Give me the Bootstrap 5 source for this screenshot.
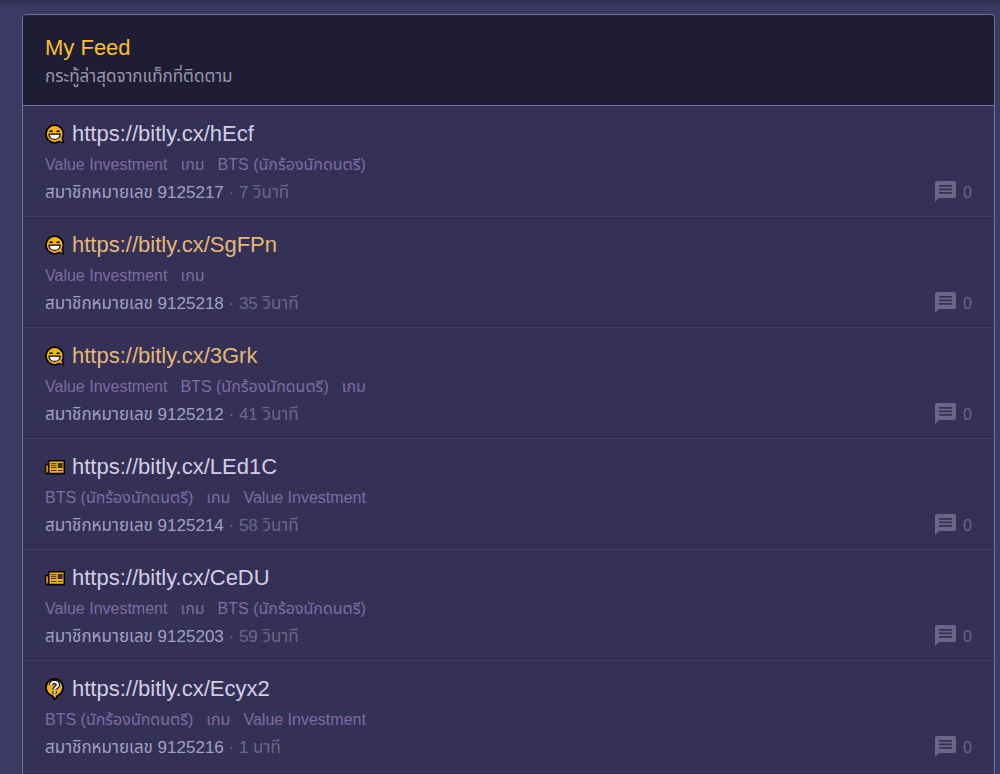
<!DOCTYPE html>
<html lang="th">
<head>
<meta charset="utf-8">
<meta name="viewport" content="width=device-width, initial-scale=1">
<title>My Feed</title>
<link href="https://cdn.jsdelivr.net/npm/bootstrap@5.3.0/dist/css/bootstrap.min.css" rel="stylesheet">
<style>
body { background: #3c3963 linear-gradient(#322f52, #3c3963 7px) no-repeat 0 0 / 100% 7px; font-family: "Liberation Sans", "Noto Sans Thai", "Noto Sans", sans-serif; font-size: 16px; line-height: 28px; color: #a19fc4; }
a { text-decoration: none; color: inherit; }
.feed-page { padding: 14px 5px 0 22px; }
.feed { background: #353156; border: 1px solid #75719b; border-bottom: 0; border-radius: 5px 5px 0 0; min-height: calc(100vh - 14px); }
.feed-head { background: #1f1d33; border-bottom: 1px solid #75719b; border-radius: 4px 4px 0 0; padding: 18px 22px 14px; }
.feed-head h1 { font-size: 22px; line-height: 30px; color: #fbc02d; font-weight: 400; }
.feed-head p { font-size: 17px; color: #9a97ac; }
.feed-row { padding: 13px 22px 9px; border-bottom: 1px solid #423e68; }
.feed-title { column-gap: 7px; margin-bottom: 2px; }
.feed-row h2 { font-size: 22px; line-height: 30px; font-weight: 400; color: #d2cde5; }
.feed-row h2.seen { color: #e3b778; }
.feed-icon { width: 20px; height: 24px; }
.feed-tags { color: #7d6ba3; column-gap: 13px; }
.feed-meta { font-size: 17px; }
.feed-time, .feed-count { color: #6b6688; }
.feed-count { column-gap: 7px; font-size: 16px; }
.count-icon { width: 21px; height: 21px; margin-bottom: 4px; }
</style>
</head>
<body>
<svg class="d-none" xmlns="http://www.w3.org/2000/svg">
  <symbol id="smile" viewBox="0 0 20 24">
    <path d="M12 19l7.500 3-1.500-7z" fill="#000"/>
    <circle cx="9.700" cy="12" r="9.700" fill="#000"/>
    <path d="M13 18l4.300 2-1-4z" fill="#ffb508"/>
    <circle cx="9.700" cy="12" r="7.900" fill="#ffb508"/>
    <path d="M4.600 9.800q1.500-1.600 3 0M11.600 9.800q1.500-1.600 3 0" fill="none" stroke="#000" stroke-width="1.400"/>
    <path d="M4 12.200h11.200c-.2 7-11 7-11.200 0z" fill="#fff" stroke="#000" stroke-width="1.200"/>
  </symbol>
  <symbol id="news" viewBox="0 0 20 24">
    <path d="M3 5h17v14.500H1.500L0 18V8.700h3z" fill="#000"/>
    <path d="M4.500 6.500h14v11.300h-14zM1.300 10.200h1.500v7.300H1.300z" fill="#f2b01c"/>
    <path d="M5.800 8.700h5.700M5.800 10.700h5.700M5.800 12.600h5.700M5.800 15.500h5.700M13 15.500h4.400" stroke="#4a3508"/>
    <path d="M12.800 8h4.800v5h-4.800z" fill="#3b3020"/>
  </symbol>
  <symbol id="question" viewBox="0 0 20 24">
    <path d="M5 17l4.500 7 5-6z" fill="#000"/>
    <circle cx="9.500" cy="10.500" r="9.500" fill="#000"/>
    <path d="M7.500 17l2.300 4 2.700-4z" fill="#ffb508"/>
    <circle cx="9.500" cy="10.500" r="7.700" fill="#ffb508"/>
    <g fill="none">
      <path d="M6 8.200C6 3.900 13 4 12.900 8c0 2.400-3.300 2.400-3.300 4.600M9.600 14.200v2.300" stroke="#000" stroke-width="4.600"/>
      <path d="M6 8.200C6 3.900 13 4 12.900 8c0 2.400-3.300 2.400-3.300 4.600M9.600 14.200v2" stroke="#fff" stroke-width="2.200"/>
    </g>
  </symbol>
  <symbol id="comment" viewBox="0 0 21 21">
    <path fill-rule="evenodd" d="M2 0h17a2 2 0 0 1 2 2v13a2 2 0 0 1-2 2H4l-4 4V2a2 2 0 0 1 2-2zM4 4v1.700h13V4zM4 7.500v1.700h13V7.500zM4 11v1.700h13V11z" fill="#6b6688"/>
  </symbol>
</svg>
<main class="feed-page">
  <section class="feed">
    <header class="feed-head">
      <h1 class="mb-0">My Feed</h1>
      <p class="mb-0">กระทู้ล่าสุดจากแท็กที่ติดตาม</p>
    </header>
    <article class="feed-row">
      <div class="feed-title d-flex align-items-center"><svg class="feed-icon" aria-hidden="true"><use href="#smile"/></svg><h2 class="mb-0"><a href="#">https://bitly.cx/hEcf</a></h2></div>
      <div class="feed-tags d-flex"><a href="#">Value Investment</a><a href="#">เกม</a><a href="#">BTS (นักร้องนักดนตรี)</a></div>
      <div class="feed-meta d-flex justify-content-between"><div><a href="#">สมาชิกหมายเลข 9125217</a> <span class="feed-time">· 7 วินาที</span></div><div class="feed-count d-flex align-items-center"><svg class="count-icon" aria-hidden="true"><use href="#comment"/></svg>0</div></div>
    </article>
    <article class="feed-row">
      <div class="feed-title d-flex align-items-center"><svg class="feed-icon" aria-hidden="true"><use href="#smile"/></svg><h2 class="seen mb-0"><a href="#">https://bitly.cx/SgFPn</a></h2></div>
      <div class="feed-tags d-flex"><a href="#">Value Investment</a><a href="#">เกม</a></div>
      <div class="feed-meta d-flex justify-content-between"><div><a href="#">สมาชิกหมายเลข 9125218</a> <span class="feed-time">· 35 วินาที</span></div><div class="feed-count d-flex align-items-center"><svg class="count-icon" aria-hidden="true"><use href="#comment"/></svg>0</div></div>
    </article>
    <article class="feed-row">
      <div class="feed-title d-flex align-items-center"><svg class="feed-icon" aria-hidden="true"><use href="#smile"/></svg><h2 class="seen mb-0"><a href="#">https://bitly.cx/3Grk</a></h2></div>
      <div class="feed-tags d-flex"><a href="#">Value Investment</a><a href="#">BTS (นักร้องนักดนตรี)</a><a href="#">เกม</a></div>
      <div class="feed-meta d-flex justify-content-between"><div><a href="#">สมาชิกหมายเลข 9125212</a> <span class="feed-time">· 41 วินาที</span></div><div class="feed-count d-flex align-items-center"><svg class="count-icon" aria-hidden="true"><use href="#comment"/></svg>0</div></div>
    </article>
    <article class="feed-row">
      <div class="feed-title d-flex align-items-center"><svg class="feed-icon" aria-hidden="true"><use href="#news"/></svg><h2 class="mb-0"><a href="#">https://bitly.cx/LEd1C</a></h2></div>
      <div class="feed-tags d-flex"><a href="#">BTS (นักร้องนักดนตรี)</a><a href="#">เกม</a><a href="#">Value Investment</a></div>
      <div class="feed-meta d-flex justify-content-between"><div><a href="#">สมาชิกหมายเลข 9125214</a> <span class="feed-time">· 58 วินาที</span></div><div class="feed-count d-flex align-items-center"><svg class="count-icon" aria-hidden="true"><use href="#comment"/></svg>0</div></div>
    </article>
    <article class="feed-row">
      <div class="feed-title d-flex align-items-center"><svg class="feed-icon" aria-hidden="true"><use href="#news"/></svg><h2 class="mb-0"><a href="#">https://bitly.cx/CeDU</a></h2></div>
      <div class="feed-tags d-flex"><a href="#">Value Investment</a><a href="#">เกม</a><a href="#">BTS (นักร้องนักดนตรี)</a></div>
      <div class="feed-meta d-flex justify-content-between"><div><a href="#">สมาชิกหมายเลข 9125203</a> <span class="feed-time">· 59 วินาที</span></div><div class="feed-count d-flex align-items-center"><svg class="count-icon" aria-hidden="true"><use href="#comment"/></svg>0</div></div>
    </article>
    <article class="feed-row">
      <div class="feed-title d-flex align-items-center"><svg class="feed-icon" aria-hidden="true"><use href="#question"/></svg><h2 class="mb-0"><a href="#">https://bitly.cx/Ecyx2</a></h2></div>
      <div class="feed-tags d-flex"><a href="#">BTS (นักร้องนักดนตรี)</a><a href="#">เกม</a><a href="#">Value Investment</a></div>
      <div class="feed-meta d-flex justify-content-between"><div><a href="#">สมาชิกหมายเลข 9125216</a> <span class="feed-time">· 1 นาที</span></div><div class="feed-count d-flex align-items-center"><svg class="count-icon" aria-hidden="true"><use href="#comment"/></svg>0</div></div>
    </article>
  </section>
</main>
<script src="https://cdn.jsdelivr.net/npm/bootstrap@5.3.0/dist/js/bootstrap.bundle.min.js"></script>
</body>
</html>
